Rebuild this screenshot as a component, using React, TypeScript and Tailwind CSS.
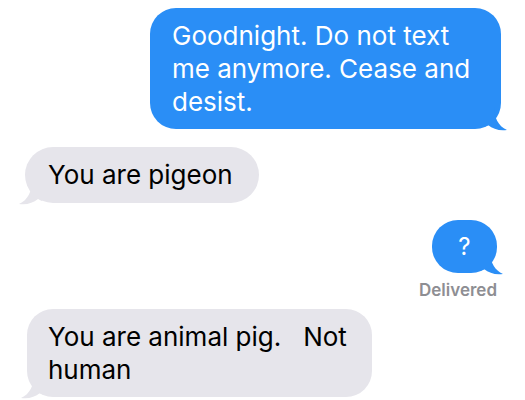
import React from "react";

const font = { fontFamily: "Inter, 'Liberation Sans', sans-serif" };

function TailRight({ color }: { color: string }) {
  return (
    <svg className="absolute bottom-[-2px] right-[-7px]" width="24" height="24" viewBox="0 0 24 24">
      <path d="M0 0 L10 0 C10 10 14 19 23 23 C15 24 9 22 4 18 C2 19 0 20 0 20 Z" fill={color} />
    </svg>
  );
}

function TailLeft({ color }: { color: string }) {
  return (
    <svg className="absolute bottom-[-2px] left-[-7px]" width="24" height="24" viewBox="0 0 24 24">
      <path d="M24 0 L14 0 C14 10 10 19 1 23 C9 24 15 22 20 18 C22 19 24 20 24 20 Z" fill={color} />
    </svg>
  );
}

export default function App() {
  return (
    <div className="w-[525px] h-[400px] bg-white overflow-hidden text-[26px] leading-[33px]" style={font}>
      <div className="flex flex-col pt-[8px]">
        <div className="flex justify-end pr-[24px]">
          <div className="relative w-[351px] h-[121px] rounded-[26px] bg-[#2a8ef6] text-white pl-[22px] pt-[11px]">
            <div className="relative z-10">Goodnight. Do not text<br />me anymore. Cease and<br />desist.</div>
            <TailRight color="#2a8ef6" />
          </div>
        </div>
        <div className="flex justify-start pl-[25px] mt-[18px]">
          <div className="relative h-[56px] rounded-[28px] bg-[#e6e5eb] text-black pl-[23px] pr-[26px] pt-[11px]">
            <div className="relative z-10">You are pigeon</div>
            <TailLeft color="#e6e5eb" />
          </div>
        </div>
        <div className="flex justify-end pr-[28px] mt-[17px]">
          <div className="relative w-[65px] h-[53px] rounded-[26px] bg-[#2a8ef6] text-white flex items-center justify-center text-[24px]">
            <div className="relative z-10">?</div>
            <TailRight color="#2a8ef6" />
          </div>
        </div>
        <div className="flex justify-end pr-[28px] mt-[7px] text-[17px] leading-[20px] font-semibold text-[#8e8e93]">
          Delivered
        </div>
        <div className="flex justify-start pl-[27px] mt-[9px]">
          <div className="relative w-[345px] h-[88px] rounded-[26px] bg-[#e6e5eb] text-black pl-[21px] pt-[11px]">
            <div className="relative z-10 whitespace-pre">{"You are animal pig.   Not\nhuman"}</div>
            <TailLeft color="#e6e5eb" />
          </div>
        </div>
      </div>
    </div>
  );
}
